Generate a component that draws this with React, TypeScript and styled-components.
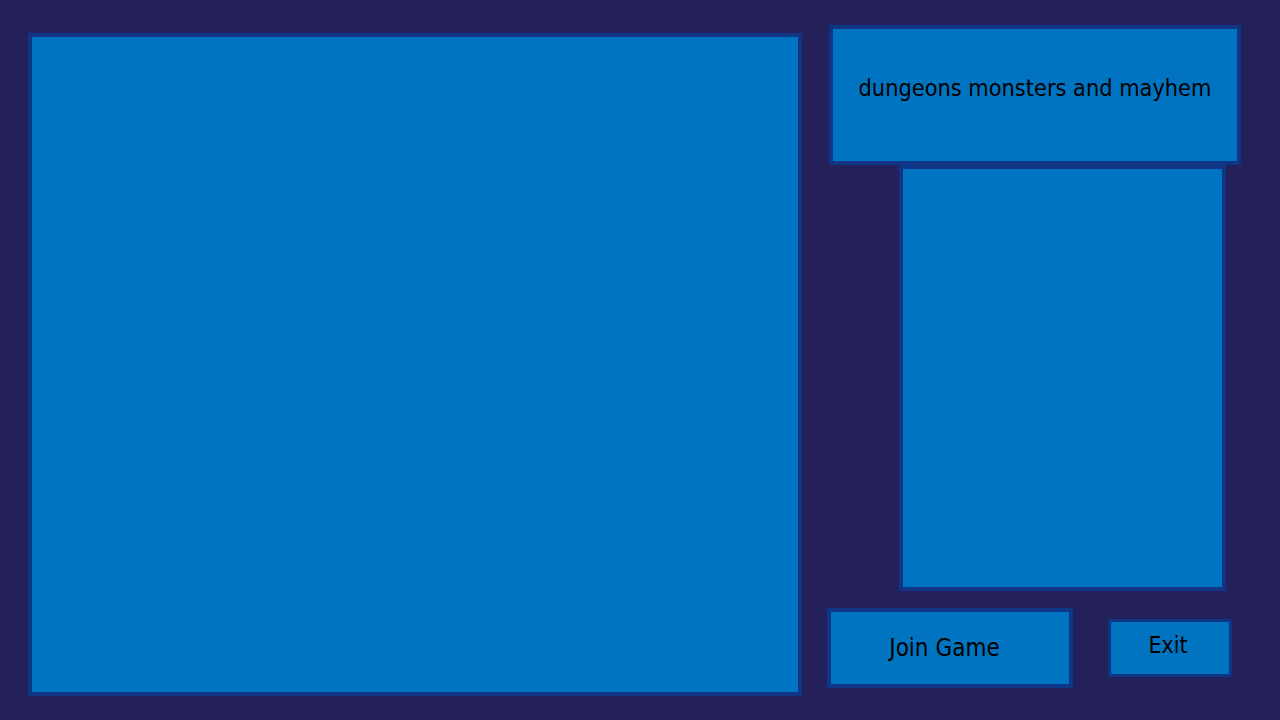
import React from 'react';
import styled, { createGlobalStyle } from 'styled-components';

const GlobalStyle = createGlobalStyle`
  html, body {
    margin: 0;
    padding: 0;
    background: #23205a;
  }
  body {
    font-family: 'DejaVu Sans Condensed', 'DejaVu Sans', sans-serif;
    color: #000;
  }
`;

const Page = styled.div`
  display: flex;
  align-items: flex-start;
  height: 720px;
  padding-left: 28px;
  box-sizing: border-box;
  overflow: hidden;
`;

const Panel = styled.div`
  box-sizing: border-box;
  background: #0074c0;
  border: 4px solid #0f3586;
`;

const GameView = styled(Panel)`
  width: 774px;
  height: 663px;
  margin-top: 33px;
`;

const SideColumn = styled.div`
  display: flex;
  flex-direction: column;
  width: 414px;
  margin-left: 25px;
`;

const TitleBox = styled(Panel)`
  display: flex;
  align-items: center;
  justify-content: center;
  width: 412px;
  height: 140px;
  margin-top: 25px;
  margin-left: 2px;
  padding-bottom: 15px;
  font-size: 23.3px;
`;

const LobbyList = styled(Panel)`
  width: 327px;
  height: 426px;
  margin-left: 72px;
`;

const ButtonRow = styled.div`
  display: flex;
  align-items: flex-start;
  margin-top: 17px;
`;

const Button = styled(Panel)<{ $w: number; $h: number; $shiftX?: number; $shiftY?: number }>`
  display: flex;
  align-items: center;
  justify-content: center;
  width: ${(p) => p.$w}px;
  height: ${(p) => p.$h}px;
  padding-right: ${(p) => p.$shiftX || 0}px;
  padding-bottom: ${(p) => p.$shiftY || 0}px;
  font-family: inherit;
  font-size: 24px;
  cursor: pointer;
`;

const ExitButton = styled(Button)`
  margin-left: 35px;
  margin-top: 11px;
  border-width: 3px;
  border-radius: 2px;
  font-size: 23px;
`;

const App: React.FC = () => {
  return (
    <>
      <GlobalStyle />
      <Page>
        <GameView />
        <SideColumn>
          <TitleBox>dungeons monsters and mayhem</TitleBox>
          <LobbyList />
          <ButtonRow>
            <Button $w={246} $h={80} $shiftX={11}>
              Join Game
            </Button>
            <ExitButton $w={124} $h={58} $shiftX={4} $shiftY={6}>
              Exit
            </ExitButton>
          </ButtonRow>
        </SideColumn>
      </Page>
    </>
  );
};

export default App;
